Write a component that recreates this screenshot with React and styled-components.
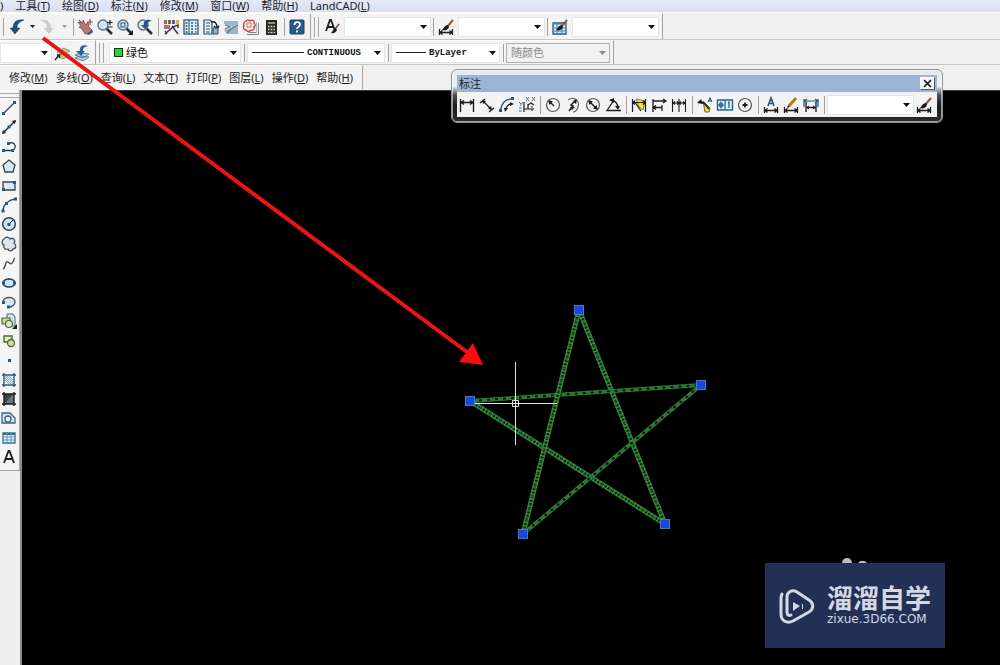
import React from 'react';
import styled, { createGlobalStyle } from 'styled-components';

const GlobalStyle = createGlobalStyle`
  * {
    box-sizing: border-box;
  }
  body {
    margin: 0;
    background: #f0f0f0;
    color: #1c1c1c;
    font-family: "Noto Sans", "Noto Sans CJK SC", sans-serif;
    font-size: 11px;
  }
`;

const Page = styled.div`
  position: relative;
  display: flex;
  flex-direction: column;
  min-height: 100vh;
`;

const MenuBar = styled.nav`
  display: flex;
  align-items: flex-start;
  gap: 12px;
  height: 13px;
  background: linear-gradient(#e6eaf7, #d9dff0);
  border-bottom: 1px solid #f8f9fc;
`;

const MenuItem = styled.button`
  flex: none;
  padding: 0;
  border: 0;
  background: none;
  color: #1c1c1c;
  font: inherit;
  line-height: ${(props) => (props.$tall ? '24px' : '11px')};
  white-space: nowrap;
`;

const Row = styled.div`
  display: flex;
  height: ${(props) => (props.$tall ? '27px' : '25px')};
  background: #f0f0f0;
  border-bottom: 1px solid ${(props) => (props.$plain ? '#f0f0f0' : '#c4c4c4')};
`;

const Panel = styled.div`
  display: flex;
  align-items: center;
  padding: 0 3px 0 0;
  background: #f3f3f3;
  border-top: 1px solid #fdfdfd;
  border-right: 1px solid #a4a4a4;
`;

const SubMenu = styled(Panel).attrs({ as: 'nav' })`
  gap: 8px;
  padding: 0 9px;
`;

const Grip = styled.span`
  width: 5px;
  height: 20px;
  margin: 0 3px 0 3px;
  border-left: 1px solid #a9a9a9;
  border-right: 1px solid #a9a9a9;
`;

const Separator = styled.span`
  width: ${(props) => props.$width || 6}px;
  height: 18px;
  display: flex;
  justify-content: center;

  &:before {
    content: '';
    width: 1px;
    background: #a0a0a0;
  }
`;

const ToolButton = styled.button`
  display: flex;
  flex: none;
  align-items: center;
  justify-content: center;
  width: 20px;
  height: 19px;
  padding: 0;
  border: 0;
  background: none;
  color: #1c1c1c;
  opacity: ${(props) => (props.disabled ? 0.4 : 1)};
`;

const SmallButton = styled(ToolButton)`
  width: ${(props) => props.$width || 10}px;

  svg {
    width: 5px;
    height: 3px;
  }
`;

const Field = styled.label`
  position: relative;
  display: flex;
  flex: none;
  align-items: center;
  width: ${(props) => props.$width}px;
  height: 20px;
  margin-left: ${(props) => props.$gap || 0}px;
  padding-left: 4px;
  gap: 3px;
  background: ${(props) => (props.$disabled ? '#f1f1f1' : '#ffffff')};
  color: ${(props) => (props.$disabled ? '#8a8a8a' : '#111111')};
  border: 1px solid ${(props) => (props.$disabled ? '#b0b0b0' : '#e6e6e6')};

  select {
    flex: 1;
    min-width: 0;
    height: 18px;
    padding: 0;
    border: 0;
    background: none;
    appearance: none;
    color: inherit;
    opacity: 1;
    font-family: ${(props) => (props.$mono ? '"Liberation Mono", monospace' : 'inherit')};
    font-size: ${(props) => (props.$mono ? '9px' : '11px')};
    font-weight: ${(props) => (props.$mono ? 700 : 400)};
  }

  > svg:last-child {
    position: absolute;
    right: 3px;
    pointer-events: none;
  }
`;

const Swatch = styled.span`
  width: 9px;
  height: 9px;
  background: #22d92e;
  border: 1px solid #222222;
`;

const LineSample = styled.span`
  width: ${(props) => props.$width}px;
  height: 1px;
  background: #222222;
`;

const Workspace = styled.div`
  display: flex;
  flex: 1;
`;

const SideBar = styled.aside`
  width: 22px;
  flex: none;
  background: #efefef;
  border-right: 2px solid #8b8b8b;
`;

const DrawTools = styled.div`
  display: flex;
  flex-direction: column;
  justify-content: space-between;
  width: 20px;
  height: 381px;
  padding: 3px 0;
  background: #f5f5f5;
  border-right: 1px solid #a4a4a4;
  border-bottom: 1px solid #a4a4a4;

  ${ToolButton} {
    width: 18px;
  }
`;

const SideGrip = styled.span`
  height: 5px;
  border-top: 1px solid #a9a9a9;
  border-bottom: 1px solid #a9a9a9;
`;

const Canvas = styled.main`
  position: relative;
  flex: 1;
  overflow: hidden;
  background: #000000;
  border-top: 1px solid #3a3a3a;
`;

const Drawing = styled.svg`
  position: absolute;
  top: 0;
  left: 0;
`;

const Pointer = styled.svg`
  position: absolute;
  top: 0;
  left: 0;
  pointer-events: none;
`;

const Floating = styled.section`
  position: absolute;
  top: 69px;
  left: 451px;
  padding: 5px;
  border: 1px solid #8e9496;
  border-radius: 6px;
  background: linear-gradient(#e3e9eb 0, #eef1f2 16px, #4a4e50 25px, #191b1c 36px, #2a2c2d);
  box-shadow: inset 0 0 0 1px rgba(255, 255, 255, 0.55);
`;

const TitleBar = styled.header`
  display: flex;
  align-items: center;
  justify-content: space-between;
  height: 17px;
  padding: 0 2px;
  background: #9bb4d4;
`;

const Title = styled.h2`
  margin: 0;
  font-size: 11px;
  font-weight: 400;
  line-height: 16px;
`;

const CloseButton = styled.button`
  display: flex;
  align-items: center;
  justify-content: center;
  width: 15px;
  height: 13px;
  padding: 0;
  background: #f4f4f4;
  border: 1px solid #ffffff;
  border-right-color: #555555;
  border-bottom-color: #555555;
`;

const FloatingTools = styled.div`
  display: flex;
  align-items: center;
  height: 25px;
  padding-right: 3px;
  background: #f3f3f3;
`;

const Brand = styled.div`
  position: absolute;
  right: 55px;
  bottom: 17px;
  display: flex;
  align-items: center;
  gap: 11px;
  width: 180px;
  height: 85px;
  padding-left: 13px;
  background: #233056;
  color: #d4d8e2;
`;

const BrandDots = styled.svg`
  position: absolute;
  top: -5px;
  left: 74px;
`;

const BrandText = styled.div`
  display: flex;
  flex-direction: column;
  gap: 5px;
  white-space: nowrap;
`;

const BrandName = styled.strong`
  font-family: "Noto Sans CJK SC", sans-serif;
  font-size: 26px;
  font-weight: 700;
  line-height: 21px;
`;

const BrandSite = styled.span`
  font-family: "DejaVu Sans", sans-serif;
  font-size: 12px;
  line-height: 14px;
`;

const INK = '#1d1d1d';
const BLUE = '#245a85';

const brush = (
  <>
    <path d="M16 2 10 9" stroke="#8a5a3c" strokeWidth="2" />
    <path d="M11 7c-3 0-4 3-6 5 3 1 6 0 7-3z" fill={INK} />
  </>
);

const baseDim = (
  <path d="M2.500 11v6M15.500 11v6M3 14.500h12M5.500 12.500 3 14.500l2.500 2M12.500 12.500l2.500 2-2.500 2" stroke={INK} strokeWidth="1.300" />
);

const lens = (
  <>
    <path d="m10 10 6 6" stroke="#1f3346" strokeWidth="2.600" />
    <circle cx="7" cy="7" r="5" fill="#d4e4ef" stroke="#5d7182" strokeWidth="1.400" />
  </>
);

const icons = {
  undo: <path d="M16 2C9 1 5 4 5 10H2l5 6 5-6H9c0-4 2-6 7-8z" fill="#1f4f80" stroke="#173c5e" strokeWidth=".5" />,
  redo: <path d="M2 2c7-1 11 2 11 8h3l-5 6-5-6h3c0-4-2-6-7-8z" fill="#8c959d" />,
  pan: (
    <>
      <path d="m2 4 3 1-2-3 4 3V2l3 5 2-3 1 5 3 3-3 4H9L6 11 3 9l2-1z" fill="#b97873" stroke="#6d3b3c" strokeWidth=".7" />
      <path d="M14 1v6M11 4h6" stroke="#8b4a49" strokeWidth="1.200" />
      <path d="m11 16 5-4 1 2-4 3z" fill="#245a85" />
    </>
  ),
  zoomRealtime: <>{lens}<path d="M14 2v5M11.500 4.500h5M12 9h4.500" stroke={INK} strokeWidth="1.200" /></>,
  zoomWindow: <>{lens}<rect x="5" y="5" width="4" height="4" stroke={BLUE} /><path d="M17 12v5h-5z" fill={INK} /></>,
  zoomPrevious: <>{lens}<path d="M16 3C11 0 7 3 8 7H5l4 4 4-4h-2c0-2 2-4 5-4z" fill="#1f5688" /></>,
  palettes: (
    <>
      <path d="M2 2h3v4H2z" fill="#d64c43" /><path d="M6 2h3v4H6z" fill="#47813b" /><path d="M10 2h3v4h-3z" fill="#8144a4" />
      <path d="M14 2h3v4h-3z" fill="#d9b535" /><path d="M2 7h6v4H2z" fill="#c15f94" />
      <path d="m3 16 8-7M10 8l6 8M11 9l5-2v3M3 13l2 3" stroke="#343c45" strokeWidth="1.500" />
    </>
  ),
  designCenter: (
    <>
      <rect x="2" y="2" width="14" height="14" fill="#e2edf4" stroke="#25506f" strokeWidth="1.200" />
      <path d="M7 2v14" stroke="#25506f" />
      <path d="M3.500 5h2M3.500 8h2M3.500 11h2M3.500 14h2M9 5h2M13 5h1.500M9 8h2M13 8h1.500M9 11h2M13 11h1.500M9 14h2M13 14h1.500" stroke={BLUE} strokeWidth="1.400" />
    </>
  ),
  sheetSet: (
    <>
      <path d="M2 2h6l2 2v12H2z" fill="#eaf1f6" stroke="#25506f" strokeWidth="1.200" />
      <path d="M4 5h4M4 8h4M4 11h4M4 14h4" stroke={BLUE} strokeWidth="1.200" />
      <path d="M9 4c4-1 6 1 6 6M12 8l3 3 2-3" stroke={INK} strokeWidth="1.400" /><path d="M11 10h5v6h-5z" fill="#8fb2cc" stroke="#25506f" />
    </>
  ),
  layerStates: (
    <>
      <path d="M2 3h14v3l-5 3-9-3zM2 12l7-2 7-2v8H5z" fill="#9bb5c4" />
      <path d="m3 7 5 2-5 2M16 7l-7 4-4 4" stroke="#587789" strokeWidth="1.300" />
    </>
  ),
  markup: (
    <>
      <path d="M16.500 5v11.500H5M14.500 14.500h-8" stroke="#82848a" /><path d="M14.500 4v10.500" stroke="#b5b5b8" />
      <path d="M4 3c1-2 3-1 4 0 2-2 5 0 4 2 2 1 1 4 0 4 1 2-1 4-3 3-1 2-4 2-5 0-3 0-3-3-2-4-1-2 0-4 2-5z" fill="#f7e6e6" stroke="#c23e45" strokeWidth="1.300" />
      <path d="M5 5h4v4H5z" stroke="#cc777a" />
    </>
  ),
  calculator: (
    <>
      <path d="M4 2h11v15H4z" fill="#292624" /><path d="M6 4h7v2H6z" fill="#7c9c6d" />
      <path d="M6 8.500h1.500m1 0h2m1 0h1.500M6 11.500h1.500m1 0h2m1 0h1.500M6 14.500h1.500m1 0h2m1 0h1.500" stroke="#ddd1c5" strokeWidth="1.600" />
    </>
  ),
  help: (
    <>
      <rect x="2" y="2" width="14" height="14" rx="1" fill="#245a8c" stroke="#183d63" />
      <path d="M6.500 7c0-4 5.500-3.500 5.500-.5C12 9 9 8.500 9 11M9 12.500v2" stroke="#ffffff" strokeWidth="1.800" />
    </>
  ),
  textStyle: <><path d="m3 13 4-11h1l4 11M4 9h6" stroke={INK} strokeWidth="1.800" /><path d="m16 6-4 5" stroke="#8a5a3c" strokeWidth="1.800" /><path d="M13 10c-2 0-3 3-5 5 3 1 5-1 6-3z" fill={INK} /></>,
  dimStyle: <>{brush}{baseDim}</>,
  tableStyle: (
    <>
      <path d="M2 5h13v11H2z" fill="#d7e8f3" stroke={BLUE} strokeWidth="1.300" /><path d="M2 6h13M2 10h13M2 13h13M6 5v11M11 5v11" stroke="#4f87ad" />
      {brush}
    </>
  ),
  layerIso: (
    <>
      <path d="m4 8 7-4 6 3-7 4zM4 12l7-3 6 2-7 4z" fill="#d3c47c" stroke="#75858d" strokeWidth=".8" />
      <path d="m2 16 4-5M4 11h2.500v3" stroke={INK} strokeWidth="1.300" />
    </>
  ),
  layerPrevious: (
    <>
      <path d="m2 14 5-2 9 1-6 4zM2 11l5-2 9 1-6 4z" fill="#bad2e2" stroke="#426a87" strokeWidth=".8" />
      <path d="M15 2C9 0 6 3 7 7H3l5 5 4-5h-2c0-3 1-4 5-5z" fill="#2c6695" />
    </>
  ),
  linear: <path d="M2.500 3v13M15.500 3v13M3 6.500h12M6 4.500l-3 2 3 2M12 4.500l3 2-3 2" stroke={INK} strokeWidth="1.400" />,
  aligned: (
    <>
      <path d="m2 7 5-4M11 16l5-4M5 5l8 8" stroke={INK} strokeWidth="1.300" />
      <path d="m4 4 4 1-3 3zM14 14l-4-1 3-3z" fill={INK} />
    </>
  ),
  arcLength: (
    <>
      <path d="M3 14C3 8 7 3 14 3" stroke={BLUE} strokeWidth="1.300" /><path d="M8 14c0-3 2-6 6-6" stroke={INK} strokeWidth="1.400" />
      <path d="m7 16-1-4h4zM16 8l-4-2v4z" fill={INK} /><path d="M1 13h3v3H1zM13 1h3v3h-3z" fill={BLUE} />
    </>
  ),
  ordinate: (
    <>
      <path d="M6 6v10M6 13h10M10 8v5M10 9l3-2 3 2" stroke={INK} strokeWidth="1.200" />
      <path d="m8 1 3 4m0-4L8 5M14 1l3 4m0-4-3 4M1 6l2 2m2-2-3 4M1 12h3M1 15h3" stroke="#51738c" />
      <path d="M14 10v6" stroke={INK} strokeDasharray="2 1" />
    </>
  ),
  radius: <><circle cx="9" cy="9" r="6.500" stroke="#585858" strokeWidth="1.200" /><path d="M10 10 6 6" stroke={INK} strokeWidth="1.400" /><path d="m4 4 5 1.500L5.500 9z" fill={INK} /></>,
  jogged: <><path d="M4 4c6-4 12 1 10 7-1 3-3 5-5 5" stroke="#686868" strokeWidth="1.200" /><path d="m5 15 4-5-2-1 4-4" stroke={INK} strokeWidth="1.500" /><path d="m13 3-1 5-3-3zM6 11h5l-3 3z" fill={INK} /></>,
  diameter: <><circle cx="9" cy="9" r="6.500" stroke="#585858" strokeWidth="1.200" /><path d="m6 6 6 6" stroke={INK} strokeWidth="1.500" /><path d="m4 4 5 1.500L5.500 9zM14 14l-5-1.500L12.500 9z" fill={INK} /></>,
  angular: <><path d="M10 4 3 14.500h14M7 4c4 0 7 4 7 8" stroke={INK} strokeWidth="1.300" /><path d="m5 4 5-2v5zM14 14l-3-4h5z" fill={INK} /></>,
  quick: <><path d="m6 3 9 2-2 9-4-3z" fill="#f3e533" stroke="#8b7f20" /><path d="M2.500 3v13M15.500 3v13M3 6.500h12M5 4.500l-2 2 2 2M13 4.500l2 2-2 2M4 5l7 10" stroke={INK} strokeWidth="1.200" /></>,
  baseline: <path d="M3 3v13M3 5h13M3 11.500h9M12 9v6M13 3l3 2-3 2M6 9.500l-3 2 3 2" stroke={INK} strokeWidth="1.300" />,
  continue: <path d="M2.500 3v13M9 3v13M15.500 3v13M3 7h12M5 5.500 3 7l2 1.500M7 5.500 9 7 7 8.500M11 5.500 9 7l2 1.500M13 5.500 15 7l-2 1.500" stroke={INK} strokeWidth="1.100" />,
  leader: <><path d="m7 5 7 7-1 4H9z" fill="#efe03e" stroke="#6e6428" /><path d="m3 6 5 1 5 6" stroke={INK} strokeWidth="1.500" /><path d="m1 7 4-4 2 5z" fill={INK} /><path d="m12 6 2-4 2 4m-3-1h2" stroke={BLUE} strokeWidth="1.200" /></>,
  tolerance: <><path d="M1.500 4h15v10h-15z" fill="#e0f0f7" stroke="#28648a" strokeWidth="1.400" /><path d="M9 4v10M5 5.500v7M2.500 9h5M12 7l1-1v6" stroke="#28648a" strokeWidth="1.300" /><circle cx="5" cy="9" r="2" stroke="#28648a" /></>,
  centerMark: <><circle cx="9" cy="9" r="6.500" stroke="#585858" strokeWidth="1.200" /><path d="M9 6.500v5M6.500 9h5" stroke={INK} strokeWidth="1.800" /></>,
  dimEdit: <><path d="m6 10 3-8 3 8M7 7.500h4" stroke={BLUE} strokeWidth="1.700" />{baseDim}</>,
  dimTextEdit: <><path d="m7 10 7-8" stroke="#b67725" strokeWidth="3" /><path d="m5 12 1-3 2 2z" fill={INK} />{baseDim}</>,
  dimUpdate: <><path d="M2 3v8M16 3v8M2 5h14M5 3 2 5l3 2M13 3l3 2-3 2" stroke={BLUE} strokeWidth="1.200" /><path d="M4 7v9M14 7v9M4 11.500h10" stroke={INK} strokeWidth="1.300" /><path d="m4 11.500 3-2v4zM14 11.500l-3-2v4z" fill={INK} /></>,
  line: <><path d="M4 14 14 4" stroke="#28435a" strokeWidth="1.300" /><path d="M2 13h3v3H2zM13 2h3v3h-3z" fill={BLUE} /></>,
  xline: <><path d="M3 15 15 3" stroke={INK} strokeWidth="1.300" /><path d="m2 16 1-4 3 3zM16 2l-4 1 3 3z" fill={INK} /><path d="M7.500 7.500h3v3h-3z" fill={BLUE} /></>,
  polyline: <><path d="M3 12.500h9M9 5c7-2 8 6 3 7.500" stroke="#28435a" strokeWidth="1.400" /><path d="M2 11h3v3H2zM7 4h3v3H7zM11 11h3v3h-3z" fill={BLUE} /></>,
  polygon: <path d="m9 3 6 5-2 7H5L3 8z" fill="#dce8ef" stroke="#304656" strokeWidth="1.300" />,
  rectangle: <><path d="M3 5h12v8H3z" fill="#dce8ef" stroke="#304656" strokeWidth="1.300" /><path d="M13 4h3v3h-3zM2 11h3v3H2z" fill={BLUE} /></>,
  arc: <><path d="M3 15C3 9 8 4 15 3" stroke="#304656" strokeWidth="1.400" /><path d="M1.500 13.500h3v3h-3zM5 6h3v3H5zM14 1.500h3v3h-3z" fill={BLUE} /></>,
  circle: <><circle cx="9" cy="9" r="6.300" fill="#d0e7f3" stroke="#25465e" strokeWidth="1.500" /><path d="m9 9 4-4" stroke={INK} /><path d="M7.500 8h3v3h-3z" fill={BLUE} /></>,
  cloud: <path d="M4 4c2-3 5-2 6 0 3-2 6 1 4 4 3 2 2 6-1 6-1 3-5 2-5 0-3 1-5-1-4-4-3-1-2-5 0-6z" fill="#dce6ee" stroke="#435263" strokeWidth="1.300" />,
  spline: <path d="M3 15c3-1 2-9 5-7s3 3 5 0 0-3 2-4" stroke="#444444" strokeWidth="1.300" />,
  ellipse: <><ellipse cx="9" cy="9" rx="6" ry="4" fill="#d0e7f3" stroke="#25465e" strokeWidth="1.500" /><path d="M2 7.500h3v3H2zM13 7.500h3v3h-3zM8 4h2v2H8z" fill={BLUE} /></>,
  ellipseArc: <><path d="M3 9c0-6 12-6 12 0 0 3-3 5-6 5" fill="#d8e7f0" stroke="#405a70" strokeWidth="1.400" /><path d="M2 8h3v3H2zM7 12.500h3v3H7z" fill={BLUE} /></>,
  insertBlock: <><path d="M7 2h6l2 3v9H7z" fill="#cfe0ee" stroke="#426782" /><path d="M2 6h8v6H2z" fill="#cbd69e" stroke="#4c6a38" strokeWidth="1.200" /><circle cx="9" cy="12" r="3.500" fill="#e3e9b5" stroke="#4c6a38" strokeWidth="1.200" /><path d="M17 12v5h-5z" fill={INK} /></>,
  makeBlock: <><path d="M4 4h8v6H4z" fill="#e4ebc5" stroke="#4c6a38" strokeWidth="1.400" /><circle cx="11" cy="11" r="3.500" fill="#d2dcaa" stroke="#4c6a38" strokeWidth="1.300" /></>,
  point: <path d="M8 8h3v3H8z" fill={BLUE} />,
  hatch: <><path d="M4 2v14M14 2v14M2 4h14M2 14h14" stroke="#245a85" strokeWidth="1.400" /><path d="m5 5 8 8M9 5l4 4M5 9l4 4M5 7l6 6M7 5l6 6" stroke="#5f91b5" strokeWidth=".8" /></>,
  gradient: <><path d="M4 4h10v10H4z" fill="#64737b" /><path d="M4 14V4h9z" fill="#39464c" /><path d="M4 2v14M14 2v14M2 4h14M2 14h14" stroke={INK} strokeWidth="1.400" /></>,
  region: <><path d="M2 4h8l5 5v5H2z" fill="#d2e4f0" stroke="#386482" strokeWidth="1.300" /><circle cx="8" cy="10" r="3" fill="#ffffff" stroke="#386482" strokeWidth="1.300" /></>,
  table: <><path d="M3 4h12v10H3z" fill="#eaf3fa" stroke="#376b93" strokeWidth="1.300" /><path d="M3 5h12" stroke="#376b93" strokeWidth="2" /><path d="M3 8h12M3 11h12M7 4v10M11 4v10" stroke="#6395ba" /></>,
  mtext: <path d="M4 15 8.500 3h1L14 15M5.500 11h7" stroke={INK} strokeWidth="1.800" />,
};

const Icon = ({ name }) => (
  <svg width="18" height="18" viewBox="0 0 18 18" fill="none" aria-hidden="true">
    {icons[name]}
  </svg>
);

const Arrow = () => (
  <svg width="7" height="4" viewBox="0 0 7 4" aria-hidden="true">
    <path d="M0 0h7L3.500 4z" fill="currentColor" />
  </svg>
);

const Tools = ({ names }) => names.map((name) => (
  <ToolButton key={name} aria-label={name}>
    <Icon name={name} />
  </ToolButton>
));

const Select = ({ label, value, children, ...rest }) => (
  <Field {...rest}>
    {children}
    <select aria-label={label} disabled={rest.$disabled}>
      <option>{value}</option>
    </select>
    <Arrow />
  </Field>
);

const Menu = ({ items, tall }) => items.map(([label, key]) => (
  <MenuItem key={label + key} $tall={tall}>
    {label}(<u>{key}</u>)
  </MenuItem>
));

const mainMenu = [['工具', 'T'], ['绘图', 'D'], ['标注', 'N'], ['修改', 'M'], ['窗口', 'W'], ['帮助', 'H'], ['LandCAD', 'L']];
const subMenu = [['修改', 'M'], ['多线', 'O'], ['查询', 'L'], ['文本', 'T'], ['打印', 'P'], ['图层', 'L'], ['操作', 'D'], ['帮助', 'H']];

const drawTools = [
  'line', 'xline', 'polyline', 'polygon', 'rectangle', 'arc', 'circle', 'cloud', 'spline', 'ellipse',
  'ellipseArc', 'insertBlock', 'makeBlock', 'point', 'hatch', 'gradient', 'region', 'table', 'mtext',
];

const points = [[579, 310], [665, 524], [470, 401], [701, 385], [523, 534]];

const Star = () => (
  <Drawing width="978" height="574" viewBox="22 91 978 574" fill="none">
    {points.map(([x, y], i) => {
      const [x2, y2] = points[(i + 1) % points.length];
      const d = `M${x} ${y}L${x2} ${y2}`;
      // the two edges that meet at the right tip are drawn thinner
      const thin = i === 2 || i === 3;
      return (
        <g key={d}>
          <path d={d} stroke="#2a7a30" strokeWidth={thin ? 4 : 5} />
          <path d={d} stroke="#061a08" strokeWidth="2" strokeDasharray={thin ? '5 3' : '2 1'} />
          <path d={d} stroke="#5aa75f" strokeWidth={thin ? 3 : 5} strokeDasharray="1 3" strokeOpacity="0.7" />
        </g>
      );
    })}
    <path d="M515.500 362v83M474 403.500h83" stroke="#e4e4e4" />
    <path d="M512.500 400.500h6v6h-6z" stroke="#e4e4e4" />
    {points.map(([x, y]) => (
      <rect key={x} x={x - 4.5} y={y - 4.5} width="9" height="9" fill="#1648e0" stroke="#5278b8" />
    ))}
  </Drawing>
);

const DimensionToolbar = () => (
  <Floating>
    <TitleBar>
      <Title>标注</Title>
      <CloseButton aria-label="关闭">
        <svg width="9" height="9" viewBox="0 0 9 9"><path d="m1 1 7 7M8 1 1 8" stroke="#111111" strokeWidth="1.600" /></svg>
      </CloseButton>
    </TitleBar>
    <FloatingTools>
      <Tools names={['linear', 'aligned', 'arcLength', 'ordinate']} />
      <Separator />
      <Tools names={['radius', 'jogged', 'diameter', 'angular']} />
      <Separator />
      <Tools names={['quick', 'baseline', 'continue']} />
      <Separator />
      <Tools names={['leader', 'tolerance', 'centerMark']} />
      <Separator />
      <Tools names={['dimEdit', 'dimTextEdit', 'dimUpdate']} />
      <Separator />
      <Select label="标注样式" $width={87} />
      <Tools names={['dimStyle']} />
    </FloatingTools>
  </Floating>
);

const App = () => {
  return (
    <Page>
      <GlobalStyle />
      <MenuBar>
        <MenuItem>)</MenuItem>
        <Menu items={mainMenu} />
      </MenuBar>
      <Row $tall>
        <Panel>
          <Separator $width={7} />
          <Tools names={['undo']} />
          <SmallButton aria-label="undo list"><Arrow /></SmallButton>
          <ToolButton aria-label="redo" disabled><Icon name="redo" /></ToolButton>
          <SmallButton aria-label="redo list" $width={14} disabled><Arrow /></SmallButton>
          <Separator $width={4} />
          <Tools names={['pan', 'zoomRealtime', 'zoomWindow', 'zoomPrevious']} />
          <Separator />
          <Tools names={['palettes', 'designCenter', 'sheetSet', 'layerStates', 'markup', 'calculator']} />
          <Separator />
          <Tools names={['help']} />
        </Panel>
        <Panel>
          <Grip />
          <Tools names={['textStyle']} />
          <Select label="文字样式" $width={87} $gap={2} />
          <Separator $width={5} />
          <Tools names={['dimStyle']} />
          <Select label="标注样式" $width={87} $gap={2} />
          <Separator $width={5} />
          <Tools names={['tableStyle']} />
          <Select label="表格样式" $width={87} $gap={2} />
        </Panel>
      </Row>
      <Row>
        <Panel>
          <Select label="图层" $width={52} />
          <Tools names={['layerIso', 'layerPrevious']} />
        </Panel>
        <Panel>
          <Grip />
          <Select label="颜色" value="绿色" $width={132} $gap={2}>
            <Swatch />
          </Select>
          <Separator />
          <Select label="线型" value="CONTINUOUS" $width={138} $mono>
            <LineSample $width={52} />
          </Select>
          <Separator />
          <Select label="线宽" value="ByLayer" $width={109} $mono>
            <LineSample $width={30} />
          </Select>
          <Separator />
          <Select label="打印样式" value="随颜色" $width={104} $disabled />
        </Panel>
      </Row>
      <Row $plain>
        <SubMenu>
          <Menu items={subMenu} tall />
        </SubMenu>
      </Row>
      <Workspace>
        <SideBar>
          <DrawTools>
            <SideGrip />
            <Tools names={drawTools} />
          </DrawTools>
        </SideBar>
        <Canvas>
          <Star />
          <Brand>
            <BrandDots width="32" height="5" viewBox="0 0 32 5">
              <path d="M3 5a5 5 0 0 1 10 0zM19 5a5 4 0 0 1 9 0z" fill="#bdbdbd" />
            </BrandDots>
            <svg width="38" height="38" viewBox="0 0 38 38" fill="none" aria-hidden="true">
              <path d="M4 7c-1 2-1 3-1 5v15c0 7 6 10 12 7l16-9c5-3 5-9 0-12L19 5c-5-3-10 0-10 5v15c0 3 2 4 4 3" stroke="#d4d8e2" strokeWidth="3" strokeLinecap="round" strokeLinejoin="round" />
              <path d="m15 15 7 4-7 5zM24 17h1v5h-1z" fill="#d4d8e2" />
            </svg>
            <BrandText>
              <BrandName>溜溜自学</BrandName>
              <BrandSite>zixue.3D66.COM</BrandSite>
            </BrandText>
          </Brand>
        </Canvas>
      </Workspace>
      <DimensionToolbar />
      <Pointer width="500" height="380" viewBox="0 0 500 380">
        <path d="M43 38 467 352" stroke="#e91414" strokeWidth="4" />
        <path d="m483 365-24-3 14-19z" fill="#fa0d0d" />
      </Pointer>
    </Page>
  );
};

export default App;
